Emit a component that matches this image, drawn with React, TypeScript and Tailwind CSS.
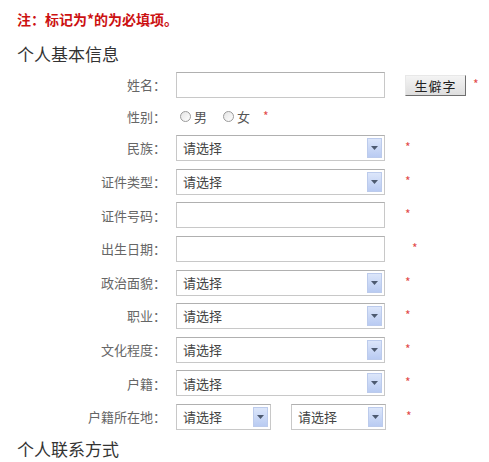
import React from 'react';

const FONT = { fontFamily: '"Noto Sans CJK SC", "Noto Sans", sans-serif' };

const Star: React.FC<{ className?: string }> = ({ className = 'ml-[20px]' }) => (
    <span className={`${className} text-[12px] leading-none text-[#e24a4a] -mt-[2px]`}>*</span>
);

const Label: React.FC<{ text: string }> = ({ text }) => (
    <div className="w-[149px] shrink-0 text-right text-[13px] text-[#666]">{text}：</div>
);

const TextBox: React.FC = () => (
    <div className="ml-[10px] h-[26px] w-[209px] border border-[#c8c8c8] border-t-[#b0b0b0] bg-white" />
);

const SelectBox: React.FC<{ width: string; className?: string }> = ({ width, className = '' }) => (
    <div className={`${width} ${className} flex h-[26px] items-center justify-between border border-[#c8c8c8] border-t-[#b0b0b0] bg-white`}>
        <span className="pl-[6px] text-[13px] text-[#444]">请选择</span>
        {/* dropdown arrow */}
        <span className="mr-[2px] flex h-[20px] w-[15px] items-center justify-center border border-[#bccbec] bg-gradient-to-b from-[#dce6fa] to-[#b9cbf2]">
            <svg width="7" height="4" viewBox="0 0 7 4">
                <path d="M0 0 H7 L3.5 4 Z" fill="#4d5a70" />
            </svg>
        </span>
    </div>
);

const Radio: React.FC<{ text: string }> = ({ text }) => (
    <span className="flex items-center">
        <span className="h-[11px] w-[11px] rounded-full border border-[#9a9a9a] bg-gradient-to-br from-[#e4e4e4] to-white" />
        <span className="ml-[3px] text-[13px] text-[#555]">{text}</span>
    </span>
);

const SelectRow: React.FC<{ label: string }> = ({ label }) => (
    <div className="flex items-center">
        <Label text={label} />
        <SelectBox width="w-[209px]" className="ml-[10px]" />
        <Star />
    </div>
);

const App: React.FC = () => {
    return (
        <div className="h-[462px] w-[489px] overflow-hidden bg-white pl-[17px] pt-[9px]" style={FONT}>
            <p className="h-[20px] text-[14px] font-bold leading-[20px] text-[#cc1111]">注：标记为*的为必填项。</p>
            <h3 className="mt-[14px] h-[22px] text-[17px] leading-[22px] text-[#333]">个人基本信息</h3>

            <div className="mt-[7px] flex flex-col gap-[7.6px]">
                <div className="flex items-center">
                    <Label text="姓名" />
                    <TextBox />
                    <button className="ml-[20px] h-[21px] w-[61px] border border-[#e8e8e8] border-b-[#6f6f6f] border-r-[#6f6f6f] bg-gradient-to-b from-[#f4f4f4] to-[#dedede] text-[13px] leading-none tracking-[1px] text-[#222]">
                        生僻字
                    </button>
                    <Star className="ml-[7px]" />
                </div>

                <div className="flex h-[22px] items-center">
                    <Label text="性别" />
                    <div className="ml-[14px] flex items-center gap-[16px]">
                        <Radio text="男" />
                        <Radio text="女" />
                    </div>
                    <Star className="ml-[13px]" />
                </div>

                <SelectRow label="民族" />
                <SelectRow label="证件类型" />

                <div className="flex items-center">
                    <Label text="证件号码" />
                    <TextBox />
                    <Star />
                </div>
                <div className="flex items-center">
                    <Label text="出生日期" />
                    <TextBox />
                    <Star className="ml-[27px]" />
                </div>

                <SelectRow label="政治面貌" />
                <SelectRow label="职业" />
                <SelectRow label="文化程度" />
                <SelectRow label="户籍" />

                <div className="flex items-center">
                    <Label text="户籍所在地" />
                    <SelectBox width="w-[95px]" className="ml-[10px]" />
                    <SelectBox width="w-[95px]" className="ml-[20px]" />
                    <Star />
                </div>
            </div>

            <h3 className="mt-[8px] h-[22px] text-[17px] leading-[22px] text-[#333]">个人联系方式</h3>
        </div>
    );
};

export default App;
